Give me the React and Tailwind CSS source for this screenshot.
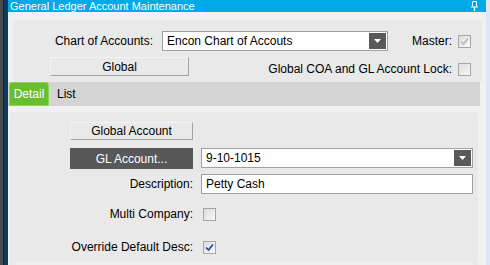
const font = { fontFamily: '"Liberation Sans", Arial, sans-serif' }

const Check = ({ checked, disabled }) => (
  <div className="w-[13px] h-[13px] border border-[#a6a6a6] bg-gradient-to-br from-[#dcdcdc] to-[#f8f8f8] flex items-center justify-center">
    {checked && (
      <svg width="9" height="9" viewBox="0 0 9 9">
        <path d="M1 4.5 L3.5 7 L8 1.5" fill="none" stroke={disabled ? '#b4b9c4' : '#2a3f9c'} strokeWidth="1.6" />
      </svg>
    )}
  </div>
)

const Arrow = () => (
  <svg width="7" height="4" viewBox="0 0 7 4">
    <path d="M0 0 H7 L3.5 4 Z" fill="#fff" />
  </svg>
)

const Combo = ({ value, className }) => (
  <div className={`flex h-[20px] border border-[#a0a0a0] bg-white ${className}`}>
    <div className="flex-1 px-[4px] leading-[18px] text-[12px] text-black">{value}</div>
    <div className="w-[17px] m-[1px] bg-[#595959] flex items-center justify-center">
      <Arrow />
    </div>
  </div>
)

const FlatButton = ({ children, className }) => (
  <div className={`flex items-center justify-center border-t border-l border-[#f4f4f4] border-r border-b border-r-[#a3a3a3] border-b-[#a3a3a3] bg-[#e9e9e9] text-[12px] text-black ${className}`}>
    {children}
  </div>
)

export default function App() {
  return (
    <div className="flex w-[490px] h-[265px] overflow-hidden select-none" style={font}>
      <div className="w-[3px] bg-[#4b4b4b]" />
      <div className="w-[1px] bg-[#16222c]" />
      <div className="w-[4px] bg-[#0e3a5e]" />

      <div className="flex-1 flex flex-col bg-[#f1f1f3]">
        {/* Title bar */}
        <div className="h-[12px] bg-[#00a9e8] flex items-center justify-between pl-[2px] pr-[8px] overflow-hidden">
          <span className="text-[11px] leading-[12px] text-white">General Ledger Account Maintenance</span>
          <svg width="7" height="10" viewBox="0 0 7 10">
            <path d="M1.5 0.5 H5.5 V5.5 M1.5 0.5 V5.5" fill="none" stroke="#fff" strokeWidth="1" />
            <path d="M0 6 H7 M3.5 6 V10" fill="none" stroke="#fff" strokeWidth="1.2" />
          </svg>
        </div>

        {/* Top panel */}
        <div className="pl-[5px] pr-[4px] pt-[8px]">
          <div className="h-[62px] bg-[#e9e9e9] rounded-t-[4px] pt-[11px] pr-[11px] flex flex-col gap-[6px]">
            <div className="flex items-center h-[20px]">
              <div className="w-[140px] text-right text-[12px] text-black">Chart of Accounts:</div>
              <Combo value="Encon Chart of Accouts" className="ml-[9px] w-[226px]" />
              <div className="flex-1 text-right text-[12px] text-black">Master:</div>
              <div className="ml-[6px]"><Check checked disabled /></div>
            </div>
            <div className="flex items-end h-[19px]">
              <FlatButton className="ml-[37px] w-[139px] h-[19px]">Global</FlatButton>
              <div className="flex-1 text-right text-[12px] text-black leading-[13px]">Global COA and GL Account Lock:</div>
              <div className="ml-[6px]"><Check /></div>
            </div>
          </div>
        </div>

        {/* Tabs */}
        <div className="mr-[6px] h-[24px] bg-[#d4d4d4] flex items-end">
          <div className="ml-[1px] w-[40px] h-[24px] bg-[#6abd2d] border border-[#8fd35a] rounded-t-[3px] flex items-center justify-center text-[12px] text-white">
            Detail
          </div>
          <div className="ml-[8px] h-[24px] flex items-center text-[12px] text-black">List</div>
        </div>

        {/* Detail panel */}
        <div className="pl-[2px] pr-[8px] pt-[6px] flex-1 flex">
          <div className="flex-1 bg-[#e9e9e9] rounded-t-[4px] pt-[10px] flex flex-col">
            <div className="grid grid-cols-[183px_272px] gap-x-[8px] items-center text-[12px] leading-[14px] text-black">
              <div className="flex justify-end h-[18px]">
                <FlatButton className="w-[123px] h-[18px]">Global Account</FlatButton>
              </div>
              <div className="h-[18px]" />

              <div className="flex justify-end mt-[8px]">
                <div className="w-[123px] h-[21px] bg-[#585858] flex items-center justify-center text-white">GL Account...</div>
              </div>
              <Combo value="9-10-1015" className="mt-[8px] -mb-[1px] self-start w-[272px]" />

              <div className="text-right mt-[5px]">Description:</div>
              <div className="mt-[5px] h-[20px] border border-[#a0a0a0] bg-white px-[4px] leading-[18px] w-[272px]">Petty Cash</div>

              <div className="text-right mt-[14px] h-[13px] leading-[13px]">Multi Company:</div>
              <div className="mt-[14px] ml-[2px]"><Check /></div>

              <div className="text-right mt-[20px] h-[13px] leading-[13px]">Override Default Desc:</div>
              <div className="mt-[20px] ml-[2px]"><Check checked /></div>
            </div>
            <div className="mt-[7px] ml-[6px] mr-[5px] flex-1 bg-[#efefef] rounded-t-[3px]" />
          </div>
        </div>
      </div>

      <div className="w-[4px] bg-[#dce8f5]" />
    </div>
  )
}
